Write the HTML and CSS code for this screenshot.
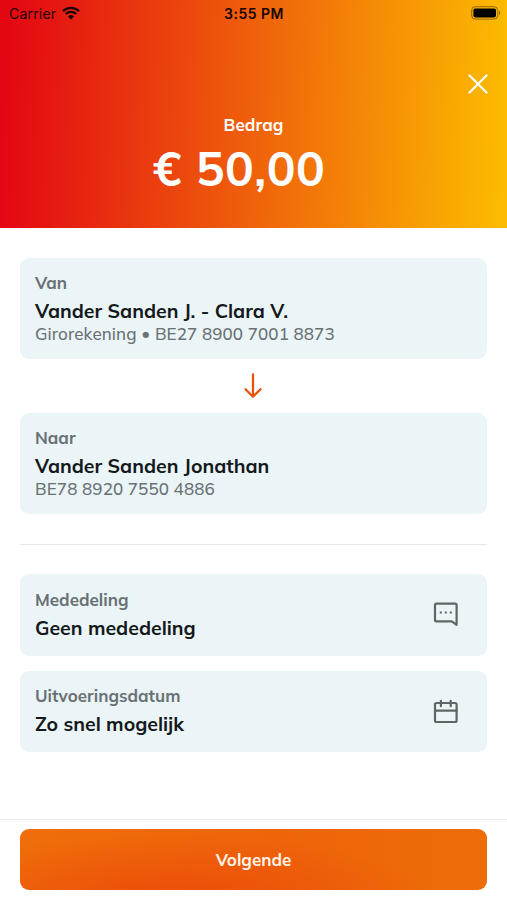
FILE: index.html
```
<!DOCTYPE html>
<html lang="nl">
<head>
    <meta charset="UTF-8">
    <meta name="viewport" content="width=device-width, initial-scale=1.0">
    <title>Overschrijving</title>
    <link rel="stylesheet" href="styles.css">
</head>
<body>
    <div class="page">
        <header class="header">
            <div class="status">
                <div class="carrier">
                    <span>Carrier</span>
                    <svg width="18" height="14" viewBox="0 0 18 14">
                        <path d="M1 5.1a11.6 11.6 0 0 1 16 0M3.8 8a7.6 7.6 0 0 1 10.4 0" fill="none" stroke="#1c0500" stroke-width="2.3"/>
                        <path d="M9 13.6l-3-3.2a4.4 4.4 0 0 1 6 0z" fill="#1c0500"/>
                    </svg>
                </div>
                <div class="time">3:55 PM</div>
                <svg class="battery" width="30" height="14" viewBox="0 0 30 14">
                    <rect x=".7" y=".7" width="26" height="12.4" rx="3.6" fill="none" stroke="#000" stroke-opacity=".42"/>
                    <rect x="2.4" y="2.4" width="22.6" height="9" rx="1.8" fill="#000"/>
                    <path d="M28 4.8v4.4c1.6-.6 1.6-3.8 0-4.4z" fill="#000" fill-opacity=".45"/>
                </svg>
            </div>
            <button class="close" aria-label="Sluiten">
                <svg width="20" height="20" viewBox="0 0 20 20">
                    <path d="M1.5 1.5l17 17M18.5 1.5l-17 17" stroke="#fff" stroke-width="2.2" stroke-linecap="round"/>
                </svg>
            </button>
            <div class="bedrag">Bedrag</div>
            <div class="amount">€ 50,00</div>
        </header>
        <main class="content">
            <div class="card">
                <div class="label">Van</div>
                <div class="name">Vander Sanden J. - Clara V.</div>
                <div class="iban">Girorekening • BE27 8900 7001 8873</div>
            </div>
            <div class="arrow">
                <svg width="20" height="26" viewBox="0 0 20 26">
                    <path d="M10 1.5v22M2.5 16.3l7.5 7.4 7.5-7.4" fill="none" stroke="#ea5109" stroke-width="2.3" stroke-linecap="round" stroke-linejoin="round"/>
                </svg>
            </div>
            <div class="card">
                <div class="label">Naar</div>
                <div class="name">Vander Sanden Jonathan</div>
                <div class="iban">BE78 8920 7550 4886</div>
            </div>
            <div class="line"></div>
            <div class="card option">
                <div>
                    <div class="label">Mededeling</div>
                    <div class="name">Geen mededeling</div>
                </div>
                <svg width="28" height="28" viewBox="0 0 28 28">
                    <path d="M4.4 3.6h18.8q1.4 0 1.4 1.4v19.8l-4.8-3.5h-15.4q-1.4 0-1.4-1.4v-14.9q0-1.4 1.4-1.4z" fill="none" stroke="#5f6567" stroke-width="2.2" stroke-linejoin="round"/>
                    <path d="M7.8 12.4h2M12.8 12.4h2M17.8 12.4h2" stroke="#5f6567" stroke-width="2"/>
                </svg>
            </div>
            <div class="card option">
                <div>
                    <div class="label">Uitvoeringsdatum</div>
                    <div class="name">Zo snel mogelijk</div>
                </div>
                <svg width="28" height="28" viewBox="0 0 28 28">
                    <rect x="3" y="5" width="21.6" height="19" rx="1.6" fill="none" stroke="#5f6567" stroke-width="2.2"/>
                    <path d="M3 12.6h21.6M8.9 2.8v5.4M18.7 2.8v5.4" fill="none" stroke="#5f6567" stroke-width="2.2" stroke-linecap="round"/>
                </svg>
            </div>
        </main>
        <footer class="footer">
            <button class="next">Volgende</button>
        </footer>
    </div>
</body>
</html>
```
FILE: styles.css
```
* {
    box-sizing: border-box;
}
body {
    margin: 0;
    background: #fff;
    font-family: Mulish, Lato, "Open Sans", sans-serif;
    color: #14191b;
}
.page {
    height: 900px;
    display: flex;
    flex-direction: column;
}
.header {
    height: 228px;
    background: linear-gradient(92deg, #e30613 1%, #ef610b 50%, #fcbb00 99%);
    color: #fff;
    text-align: center;
}
.status {
    height: 28px;
    padding: 0 6px 1px 9px;
    display: grid;
    grid-template-columns: 1fr auto 1fr;
    align-items: center;
    font-family: Inter, sans-serif;
    font-size: 14px;
    letter-spacing: 0.2px;
    color: #1c0500;
}
.carrier {
    display: flex;
    align-items: center;
    gap: 6px;
}
.carrier svg {
    margin-top: -2px;
}
.time {
    padding-right: 2px;
    font-weight: 600;
    letter-spacing: 0.5px;
    color: #160500;
}
.battery {
    justify-self: end;
    margin-top: -1px;
}
.close {
    display: block;
    margin: 46px 19px 0 auto;
    padding: 0;
    width: 20px;
    height: 20px;
    border: none;
    background: none;
}
.close svg {
    display: block;
}
.bedrag {
    margin-top: 20px;
    font-size: 17px;
    font-weight: bold;
    line-height: 22px;
    letter-spacing: 0.1px;
}
.amount {
    padding-right: 29px;
    font-size: 48px;
    font-weight: 680;
    line-height: 64px;
    letter-spacing: 0.5px;
}
.content {
    flex: 1;
    padding: 30px 20px 0;
}
.card {
    height: 101px;
    padding: 13px 15px;
    border-radius: 9px;
    background: #ebf4f7;
}
.label {
    font-size: 17px;
    font-weight: bold;
    line-height: 24px;
    color: #697174;
}
.name {
    margin-top: 3px;
    font-size: 19.5px;
    font-weight: bold;
    line-height: 25px;
}
.iban {
    font-size: 17px;
    font-weight: 500;
    line-height: 22px;
    letter-spacing: 0.1px;
    color: #697174;
}
.arrow {
    height: 54px;
    padding-right: 1px;
    display: flex;
    align-items: center;
    justify-content: center;
}
.line {
    height: 1px;
    margin: 30px 0 29px;
    background: #e3e8ea;
}
.option {
    height: 82px;
    margin-bottom: 15px;
    padding-top: 14px;
    padding-right: 27px;
    display: flex;
    justify-content: space-between;
}
.option svg {
    margin-top: 12px;
}
.option + .option {
    height: 81px;
    padding-top: 13px;
}
.option + .option svg {
    margin-top: 14px;
}
.footer {
    height: 81px;
    padding: 9px 20px;
    border-top: 1px solid #e6edf0;
}
.next {
    display: block;
    width: 100%;
    height: 61px;
    border: none;
    border-radius: 9px;
    background: radial-gradient(ellipse 260px 62px at 32% 110%, #ec4d0a, rgba(236, 80, 10, 0)), linear-gradient(90deg, #f06e0a, #ee640a 55%, #ed6d08);
    font: bold 17px Mulish, Lato, "Open Sans", sans-serif;
    color: #fff3e6;
}
```
